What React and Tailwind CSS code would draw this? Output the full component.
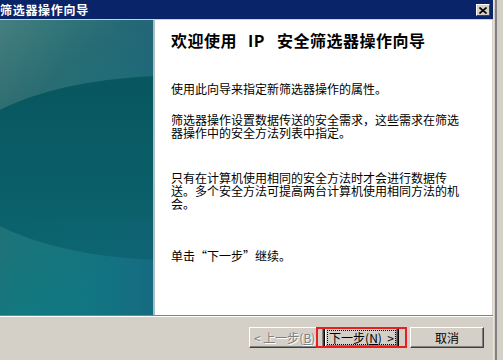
import React from "react";

const FONT = "font-['Noto_Sans_CJK_SC','Noto_Sans',sans-serif]";

function PanelArt() {
  // teal watermark picture on the left of the wizard
  return (
    <svg width="153" height="295" viewBox="0 0 153 295" className="block">
      <defs>
        <linearGradient id="bgv" x1="0" y1="0" x2="0.4" y2="1">
          <stop offset="0" stopColor="#467f80" />
          <stop offset="0.3" stopColor="#2c6b70" />
          <stop offset="1" stopColor="#107a82" />
        </linearGradient>
        <linearGradient id="bgh" x1="0" y1="0" x2="1" y2="0">
          <stop offset="0" stopColor="#0e8080" stopOpacity="0" />
          <stop offset="1" stopColor="#1a5f80" stopOpacity="0.45" />
        </linearGradient>
        <linearGradient id="ell" x1="0" y1="0" x2="0" y2="1">
          <stop offset="0" stopColor="#08565e" />
          <stop offset="1" stopColor="#0c6470" />
        </linearGradient>
      </defs>
      <rect width="153" height="295" fill="url(#bgv)" />
      <rect width="153" height="295" fill="url(#bgh)" />
      <ellipse cx="172" cy="148" rx="222" ry="92" fill="url(#ell)" />
      <rect y="200" width="153" height="95" fill="url(#bgh)" opacity="0.5" />
    </svg>
  );
}

function WinButton({ children, isDefault = false, className = "text-black" }) {
  const edge = isDefault
    ? "border border-black shadow-[inset_1px_1px_0_#ffffff,inset_-1px_-1px_0_#404040,inset_-2px_-2px_0_#808080]"
    : "border border-t-white border-l-white border-r-[#404040] border-b-[#404040] shadow-[inset_-1px_-1px_0_#808080]";
  return (
    <div
      className={`h-[21px] bg-[#d4d0c8] flex items-center justify-center text-[12px] leading-[13px] ${edge} ${className}`}
    >
      {children}
    </div>
  );
}

export default function App() {
  return (
    <div className={`w-[503px] h-[360px] overflow-hidden bg-[#d4d0c8] flex ${FONT}`}>
      <div className="w-[493px] flex flex-col">
        {/* title bar */}
        <div className="h-[19px] bg-[#0a246a] flex justify-between">
          <span className="text-white font-bold text-[12px] leading-[19px] tracking-[0.7px] whitespace-nowrap">
            筛选器操作向导
          </span>
          <div className="mt-[4px] mr-[3px] w-[14px] h-[12px] bg-[#d4d0c8] border border-t-white border-l-white border-r-[#404040] border-b-[#404040] flex items-center justify-center">
            <svg width="8" height="7" viewBox="0 0 8 7">
              <path d="M0.5 0.5 L7.5 6.5 M7.5 0.5 L0.5 6.5" stroke="#000" strokeWidth="1.6" />
            </svg>
          </div>
        </div>
        <div className="h-px bg-[#d4d0c8]" />

        {/* body */}
        <div className="h-[295px] flex">
          <PanelArt />
          <div className="w-[2px] bg-[#a9bfc1]" />
          <div className="flex-1 bg-white border-r border-[#d4d0c8] pl-[16px] pt-[10px] text-black">
            <div className="text-[16px] leading-[20px] font-bold tracking-[0.5px] whitespace-nowrap">
              <span>欢迎使用</span>
              <span className="ml-[11px] mr-[12px]">IP</span>
              <span>安全筛选器操作向导</span>
            </div>
            <div className="w-[292px] text-[12px] leading-[13px]">
              <p className="mt-[32px]">使用此向导来指定新筛选器操作的属性。</p>
              <p className="mt-[18px]">
                筛选器操作设置数据传送的安全需求，这些需求在筛选器操作中的安全方法列表中指定。
              </p>
              <p className="mt-[32px]">
                只有在计算机使用相同的安全方法时才会进行数据传送。多个安全方法可提高两台计算机使用相同方法的机会。
              </p>
              <p className="mt-[39px]">单击“下一步”继续。</p>
            </div>
          </div>
        </div>

        <div className="h-px bg-[#808080]" />
        <div className="h-px bg-white" />

        {/* button row */}
        <div className="relative flex-1 flex justify-end items-start pt-[10px] pr-[9px]">
          <WinButton className="w-[75px] justify-start pl-[4px] text-[#808080] [text-shadow:1px_1px_0_#ffffff] whitespace-pre">
            {"< 上一步("}
            <u>B</u>
            {")"}
          </WinButton>
          <WinButton isDefault className="w-[75px] text-black">
            <span className="border border-dotted border-black px-[3px] h-[15px] w-[69px] flex items-center justify-center whitespace-pre">
              {"下一步("}
              <u>N</u>
              {")  >"}
            </span>
          </WinButton>
          <WinButton className="w-[74px] ml-[11px] text-black">取消</WinButton>
          <div className="absolute left-[316px] top-[10px] w-[91px] h-[21px] border-2 border-[#ee1c1c]" />
        </div>
      </div>

      {/* window frame on the right */}
      <div className="w-[10px] flex">
        <div className="w-[1px] bg-[#e8e6e0]" />
        <div className="w-[1px] bg-[#d4d0c8]" />
        <div className="w-[2px] bg-[#808080]" />
        <div className="flex-1 bg-[#d4d0c8]" />
      </div>
    </div>
  );
}
